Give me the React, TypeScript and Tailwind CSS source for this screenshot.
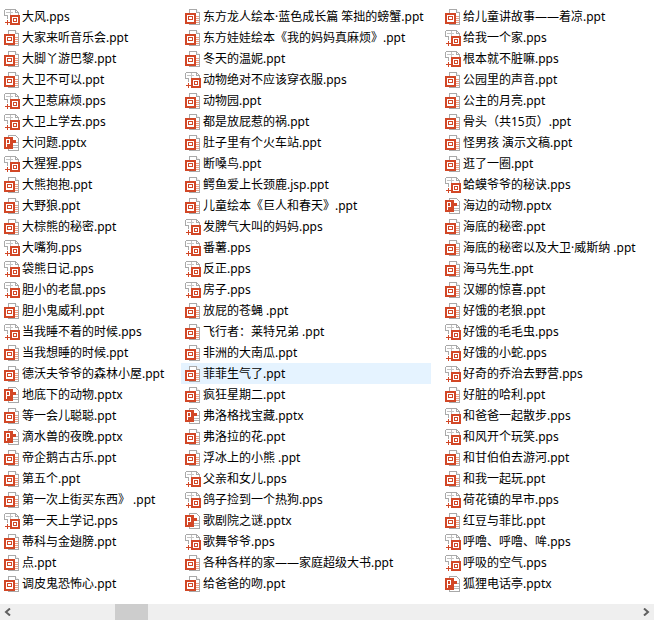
const column1 = [
  "大风.pps",
  "大家来听音乐会.ppt",
  "大脚丫游巴黎.ppt",
  "大卫不可以.ppt",
  "大卫惹麻烦.pps",
  "大卫上学去.pps",
  "大问题.pptx",
  "大猩猩.pps",
  "大熊抱抱.ppt",
  "大野狼.ppt",
  "大棕熊的秘密.ppt",
  "大嘴狗.pps",
  "袋熊日记.pps",
  "胆小的老鼠.pps",
  "胆小鬼威利.ppt",
  "当我睡不着的时候.pps",
  "当我想睡的时候.ppt",
  "德沃夫爷爷的森林小屋.ppt",
  "地底下的动物.pptx",
  "等一会儿聪聪.ppt",
  "滴水兽的夜晚.pptx",
  "帝企鹅古古乐.ppt",
  "第五个.ppt",
  "第一次上街买东西》 .ppt",
  "第一天上学记.pps",
  "蒂科与金翅膀.ppt",
  "点.ppt",
  "调皮鬼恐怖心.ppt",
];

const column2 = [
  "东方龙人绘本·蓝色成长篇 笨拙的螃蟹.ppt",
  "东方娃娃绘本《我的妈妈真麻烦》.ppt",
  "冬天的温妮.ppt",
  "动物绝对不应该穿衣服.pps",
  "动物园.ppt",
  "都是放屁惹的祸.ppt",
  "肚子里有个火车站.ppt",
  "断嗓鸟.ppt",
  "鳄鱼爱上长颈鹿.jsp.ppt",
  "儿童绘本《巨人和春天》.ppt",
  "发脾气大叫的妈妈.pps",
  "番薯.pps",
  "反正.pps",
  "房子.pps",
  "放屁的苍蝇 .ppt",
  "飞行者：莱特兄弟 .ppt",
  "非洲的大南瓜.ppt",
  "菲菲生气了.ppt",
  "疯狂星期二.ppt",
  "弗洛格找宝藏.pptx",
  "弗洛拉的花.ppt",
  "浮冰上的小熊 .ppt",
  "父亲和女儿.pps",
  "鸽子捡到一个热狗.pps",
  "歌剧院之谜.pptx",
  "歌舞爷爷.pps",
  "各种各样的家——家庭超级大书.ppt",
  "给爸爸的吻.ppt",
];

const column3 = [
  "给儿童讲故事——着凉.ppt",
  "给我一个家.pps",
  "根本就不脏嘛.pps",
  "公园里的声音.ppt",
  "公主的月亮.ppt",
  "骨头（共15页）.ppt",
  "怪男孩 演示文稿.ppt",
  "逛了一圈.ppt",
  "蛤蟆爷爷的秘诀.pps",
  "海边的动物.pptx",
  "海底的秘密.ppt",
  "海底的秘密以及大卫·威斯纳 .ppt",
  "海马先生.ppt",
  "汉娜的惊喜.ppt",
  "好饿的老狼.ppt",
  "好饿的毛毛虫.pps",
  "好饿的小蛇.pps",
  "好奇的乔治去野营.pps",
  "好脏的哈利.ppt",
  "和爸爸一起散步.pps",
  "和风开个玩笑.pps",
  "和甘伯伯去游河.ppt",
  "和我一起玩.ppt",
  "荷花镇的早市.pps",
  "红豆与菲比.ppt",
  "呼噜、呼噜、哞.pps",
  "呼吸的空气.pps",
  "狐狸电话亭.pptx",
];

// same box for all three, mt-[1px] keeps the pixels on whole coordinates
function PptIcon() {
  return (
    <svg width="16" height="16" viewBox="0 0 16 16" shapeRendering="crispEdges" className="mt-[1px] shrink-0">
      <path d="M4.5 0.5H11.5L14.5 3.5V15.5H4.5Z" fill="#fff" stroke="#a9a9a9" />
      <path d="M11.5 0.5V3.5H14.5" fill="#eee" stroke="#a9a9a9" />
      <path d="M11 7h3M11 9h3M11 11h3M11 13h3" stroke="#e8a088" />
      <rect x="0" y="4" width="11" height="11" fill="#d24726" />
      <rect x="2" y="6" width="7" height="7" fill="#fff" />
      <path d="M3.5 7.5H7.5V10.5H3.5Z" fill="#fff" stroke="#d24726" />
    </svg>
  );
}

function PpsIcon() {
  return (
    <svg width="16" height="16" viewBox="0 0 16 16" shapeRendering="crispEdges" className="mt-[1px] shrink-0">
      <path d="M0.5 0.5H11.5L14.5 3.5V6M0.5 0.5V6.5H3.5V10" fill="none" stroke="#a9a9a9" />
      <path d="M2 3.5H9M6.5 1V6" stroke="#c4c4c4" fill="none" />
      <path d="M11.5 0.5V3.5H14.5" fill="none" stroke="#a9a9a9" />
      <rect x="6" y="6" width="10" height="10" fill="#d24726" />
      <rect x="8" y="8" width="6" height="6" fill="#fff" />
      <path d="M9.5 9.5H12.5V12.5H9.5Z" fill="#fff" stroke="#d24726" />
      <path d="M3 11V16M0.5 13.5H5.5" stroke="#d24726" />
    </svg>
  );
}

function PptxIcon() {
  return (
    <svg width="16" height="16" viewBox="0 0 16 16" shapeRendering="crispEdges" className="mt-[1px] shrink-0">
      <path d="M4.5 0.5H11.5L14.5 3.5V15.5H4.5Z" fill="#fff" stroke="#a9a9a9" />
      <rect x="9" y="5" width="3" height="3" fill="#d24726" />
      <rect x="12" y="7" width="2" height="1" fill="#b8b8b8" />
      <path d="M9 10h5M9 12h5" stroke="#b8b8b8" />
      <rect x="0" y="2" width="9" height="12" fill="#d24726" />
      <path d="M2.5 11.5V4.5H5.5V8H2.5" fill="none" stroke="#fff" />
    </svg>
  );
}

function FileRow({ name, selected }: { name: string; selected?: boolean }) {
  return (
    <div className={`flex h-[21px] items-center gap-[2px] pl-[4px] ${selected ? "bg-[#e5f3ff]" : ""}`}>
      {name.endsWith(".pptx") ? <PptxIcon /> : name.endsWith(".pps") ? <PpsIcon /> : <PptIcon />}
      <span className="whitespace-pre text-[12px] leading-[21px] text-black">{name}</span>
    </div>
  );
}

export default function App() {
  return (
    <div className="flex h-[620px] w-[654px] flex-col overflow-hidden bg-white font-['Noto_Sans','Noto_Sans_CJK_SC',sans-serif]">
      <div className="flex flex-1 pt-[6px]">
        <div className="w-[181px] shrink-0">
          {column1.map((name) => (
            <FileRow key={name} name={name} />
          ))}
        </div>
        <div className="mr-[10px] w-[250px] shrink-0">
          {column2.map((name) => (
            <FileRow key={name} name={name} selected={name === "菲菲生气了.ppt"} />
          ))}
        </div>
        <div className="w-[213px] shrink-0">
          {column3.map((name) => (
            <FileRow key={name} name={name} />
          ))}
        </div>
      </div>
      <div className="flex h-[16px] shrink-0 items-center bg-[#efefef]">
        <div className="flex w-[16px] justify-center">
          <svg width="8" height="8" viewBox="0 0 8 8">
            <path d="M6 0.5L2 4l4 3.5" fill="none" stroke="#606060" strokeWidth="2" />
          </svg>
        </div>
        <div className="ml-[99px] h-[16px] w-[33px] bg-[#cdcdcd]" />
        <div className="flex-1" />
        <div className="flex w-[16px] justify-center">
          <svg width="8" height="8" viewBox="0 0 8 8">
            <path d="M2 0.5L6 4l-4 3.5" fill="none" stroke="#606060" strokeWidth="2" />
          </svg>
        </div>
      </div>
    </div>
  );
}
